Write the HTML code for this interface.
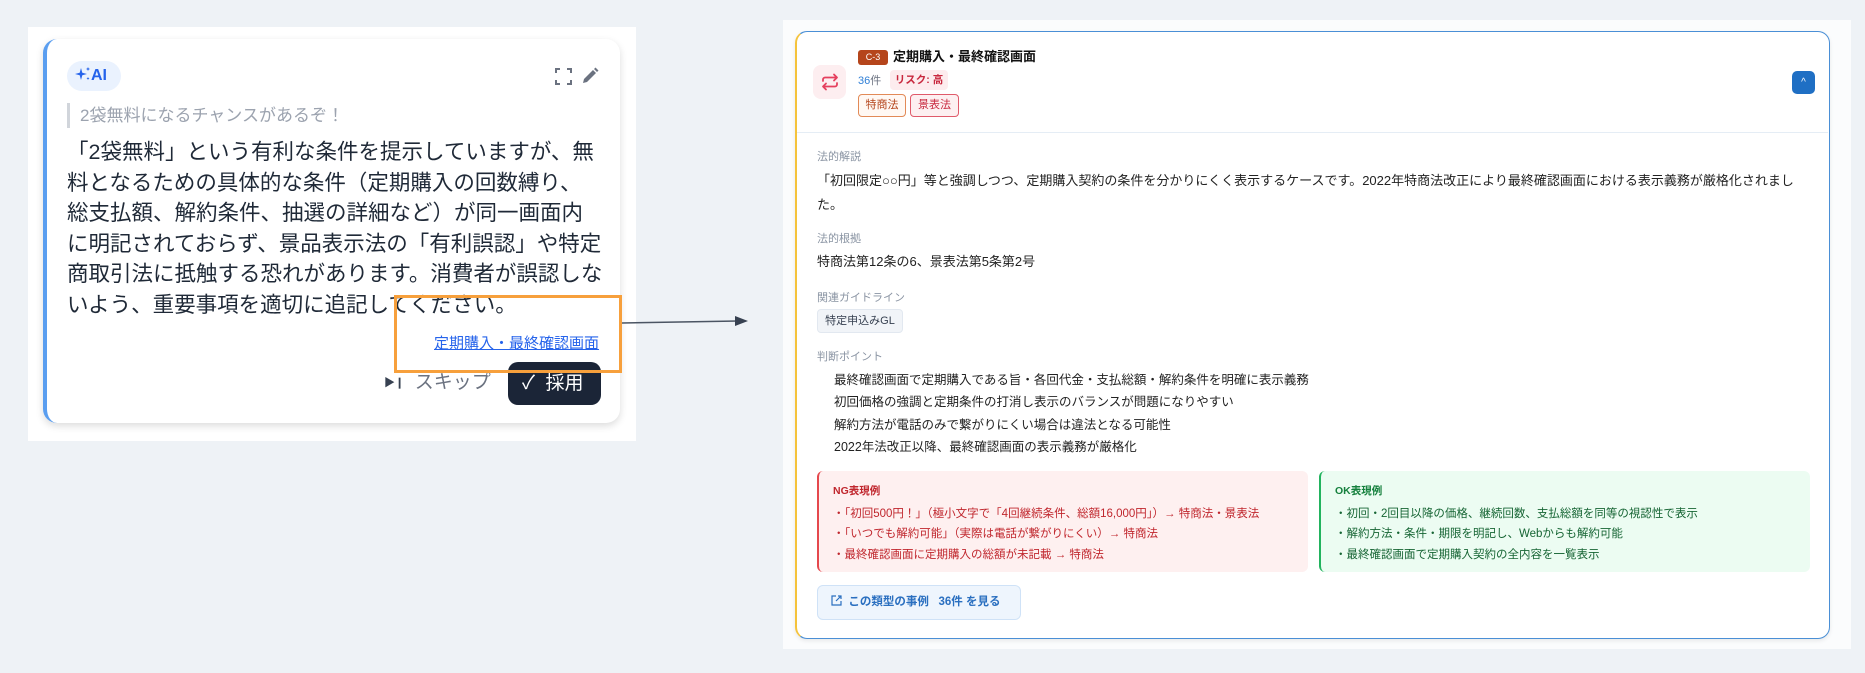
<!DOCTYPE html>
<html><head><meta charset="utf-8"><style>
*{box-sizing:border-box;margin:0;padding:0}
body{width:1865px;height:673px;background:#eef2f6;position:relative;overflow:hidden;font-family:"Liberation Sans","Noto Sans CJK JP",sans-serif;color:#1f2937}
.a{position:absolute}
.lab{position:absolute;left:817px;font-size:11px;color:#8a94a3}
.txt{position:absolute;left:817px;font-size:13px;color:#222;line-height:24px}
</style></head><body>
<!-- left panel -->
<div class="a" style="left:28px;top:27px;width:608px;height:414px;background:#fff"></div>
<div class="a" style="left:43px;top:39px;width:577px;height:384px;background:#fff;border-radius:14px;border-left:4px solid #5a9ef0;box-shadow:0 3px 8px rgba(0,0,0,.14)"></div>
<div class="a" style="left:67px;top:61px;width:54px;height:30px;border-radius:15px;background:#eaf2fe;color:#2563eb;font-weight:bold;font-size:16px;line-height:30px;padding-left:8px">
<svg width="16" height="16" viewBox="0 0 16 16" style="vertical-align:-2px"><path d="M6 2L7.3 6.7 12 8 7.3 9.3 6 14 4.7 9.3 0 8 4.7 6.7Z" fill="#2563eb"/><path d="M13 1l.6 1.4L15 3l-1.4.6L13 5l-.6-1.4L11 3l1.4-.6z" fill="#2563eb"/><path d="M13 11l.5 1 1 .5-1 .5-.5 1-.5-1-1-.5 1-.5z" fill="#2563eb"/></svg>AI</div>
<svg class="a" style="left:555px;top:68px" width="17" height="17" viewBox="0 0 17 17" fill="none" stroke="#6b7280" stroke-width="2"><path d="M1 5V1h4M12 1h4v4M16 12v4h-4M5 16H1v-4"/></svg>
<svg class="a" style="left:581px;top:67px" width="18" height="18" viewBox="0 0 18 18"><path d="M2 16l1-4L12 3l3 3-9 9z M13 2l1.5-1.5 3 3L16 5z" fill="#6b7280"/></svg>
<div class="a" style="left:67px;top:103px;width:3px;height:25px;background:#d1d5db"></div>
<div class="a" style="left:80px;top:103px;font-size:17px;line-height:25px;color:#9ca3af">2袋無料になるチャンスがあるぞ！</div>
<div class="a" style="left:67px;top:137px;width:560px;white-space:nowrap;font-size:21.5px;line-height:30.6px;color:#1f2937">「2袋無料」という有利な条件を提示していますが、無<br>料となるための具体的な条件（定期購入の回数縛り、<br>総支払額、解約条件、抽選の詳細など）が同一画面内<br>に明記されておらず、景品表示法の「有利誤認」や特定<br>商取引法に抵触する恐れがあります。消費者が誤認しな<br>いよう、重要事項を適切に追記してください。</div>
<div class="a" style="left:434px;top:334px;font-size:15px;color:#2563eb;text-decoration:underline;line-height:20px">定期購入・最終確認画面</div>
<div class="a" style="left:384px;top:371px;font-size:19px;color:#6b7280;line-height:24px"><span style="font-size:11px;color:#374151;vertical-align:2px">▶︎❙</span>&nbsp; スキップ</div>
<div class="a" style="left:508px;top:362px;width:93px;height:43px;border-radius:10px;background:#1b2537;color:#fff;font-size:19px;line-height:43px;padding-left:14px">✓&nbsp;&nbsp;採用</div>
<div class="a" style="left:394px;top:295px;width:228px;height:78px;border:3px solid #f7a03c"></div>
<svg class="a" style="left:620px;top:312px" width="130" height="20"><line x1="2" y1="11" x2="118" y2="9" stroke="#4b5563" stroke-width="1.5"/><path d="M128 9l-13-5v10z" fill="#374151"/></svg>
<!-- right panel -->
<div class="a" style="left:783px;top:20px;width:1068px;height:629px;background:#fbfcfd"></div>
<div class="a" style="left:795px;top:31px;width:1035px;height:608px;background:#fff;border:1.5px solid #4a8fd6;border-left:2.5px solid #f5c33b;border-radius:12px;box-shadow:0 2px 4px rgba(0,0,0,.08)"></div>
<div class="a" style="left:813px;top:65px;width:33px;height:34px;background:#fdeef0;border-radius:8px"></div>
<svg class="a" style="left:820px;top:72px" width="20" height="20" viewBox="0 0 20 20" fill="none" stroke="#e5405e" stroke-width="1.8" stroke-linecap="round" stroke-linejoin="round"><path d="M3 9V7.5A2 2 0 0 1 5 5.5h12M14 2.5l3 3-3 3M17 11v1.5a2 2 0 0 1-2 2H3M6 17.5l-3-3 3-3"/></svg>
<div class="a" style="left:858px;top:50px;width:30px;height:15px;background:#b5451b;border-radius:3px;color:#fff;font-size:9px;line-height:15px;text-align:center">C-3</div>
<div class="a" style="left:893px;top:48px;font-size:13px;font-weight:bold;line-height:18px;color:#111">定期購入・最終確認画面</div>
<div class="a" style="left:858px;top:73px;font-size:11px;line-height:16px;color:#6b7280"><span style="color:#2f7fd6">36</span>件</div>
<div class="a" style="left:890px;top:70px;width:58px;height:20px;background:#fdecee;border-radius:4px;color:#c8283e;font-size:10.5px;font-weight:bold;line-height:20px;text-align:center">リスク: 高</div>
<div class="a" style="left:858px;top:94px;width:48px;height:23px;border:1px solid #e28a57;background:#fff8f3;border-radius:4px;color:#b5451b;font-size:11px;line-height:21px;text-align:center">特商法</div>
<div class="a" style="left:910px;top:94px;width:49px;height:23px;border:1px solid #e05b6b;background:#fdf0f1;border-radius:4px;color:#c8283e;font-size:11px;line-height:21px;text-align:center">景表法</div>
<div class="a" style="left:1792px;top:71px;width:23px;height:23px;background:#1f6fc4;border-radius:5px;color:#fff;font-size:10px;line-height:23px;text-align:center">^</div>
<div class="a" style="left:797px;top:132px;width:1031px;height:1px;background:#e5edf5"></div>
<div class="lab" style="top:148px">法的解説</div>
<div class="txt" style="top:169px;width:990px">「初回限定○○円」等と強調しつつ、定期購入契約の条件を分かりにくく表示するケースです。2022年特商法改正により最終確認画面における表示義務が厳格化されました。</div>
<div class="lab" style="top:230px">法的根拠</div>
<div class="txt" style="top:250px">特商法第12条の6、景表法第5条第2号</div>
<div class="lab" style="top:289px">関連ガイドライン</div>
<div class="a" style="left:817px;top:309px;width:86px;height:24px;background:#f1f4f8;border:1px solid #e2e8f0;border-radius:4px;font-size:11px;line-height:22px;color:#374151;text-align:center">特定申込みGL</div>
<div class="lab" style="top:348px">判断ポイント</div>
<div class="txt" style="top:369px;left:834px;font-size:12.5px;line-height:22.3px">最終確認画面で定期購入である旨・各回代金・支払総額・解約条件を明確に表示義務<br>初回価格の強調と定期条件の打消し表示のバランスが問題になりやすい<br>解約方法が電話のみで繋がりにくい場合は違法となる可能性<br>2022年法改正以降、最終確認画面の表示義務が厳格化</div>
<div class="a" style="left:817px;top:471px;width:491px;height:101px;background:#fef0f0;border-left:2px solid #e5484d;border-radius:6px;padding:10px 0 0 14px;color:#c0262d;font-size:11.5px;line-height:20.5px"><b style="font-size:10.5px">NG表現例</b><div style="margin-top:2px">・「初回500円！」（極小文字で「4回継続条件、総額16,000円」）→ 特商法・景表法<br>・「いつでも解約可能」（実際は電話が繋がりにくい）→ 特商法<br>・最終確認画面に定期購入の総額が未記載 → 特商法</div></div>
<div class="a" style="left:1319px;top:471px;width:491px;height:101px;background:#ecfcf2;border-left:2px solid #22b35e;border-radius:6px;padding:10px 0 0 14px;color:#166534;font-size:11.5px;line-height:20.5px"><b style="font-size:10.5px;color:#15803d">OK表現例</b><div style="margin-top:2px">・初回・2回目以降の価格、継続回数、支払総額を同等の視認性で表示<br>・解約方法・条件・期限を明記し、Webからも解約可能<br>・最終確認画面で定期購入契約の全内容を一覧表示</div></div>
<div class="a" style="left:817px;top:585px;width:204px;height:35px;background:#eef5fd;border:1px solid #cfe2f7;border-radius:6px;color:#2a6fc0;font-size:11.5px;font-weight:bold;line-height:33px;padding-left:13px">
<svg width="11" height="11" viewBox="0 0 11 11" fill="none" stroke="#2a6fc0" stroke-width="1.2" style="vertical-align:-1px"><path d="M5 1H1v9h9V6M7 1h3v3M10 1L5 6"/></svg>&nbsp; この類型の事例&nbsp;&nbsp; 36件 を見る</div>
</body></html>
